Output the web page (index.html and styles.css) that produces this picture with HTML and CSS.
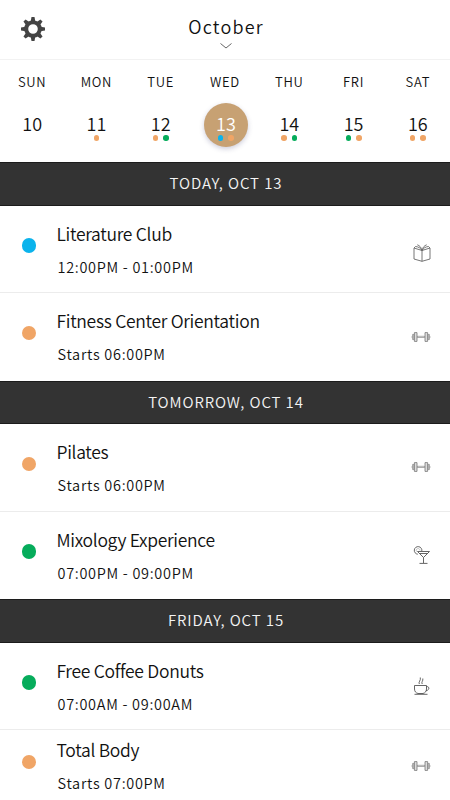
FILE: index.html
```html
<!DOCTYPE html>
<html lang="en">
  <head>
    <meta charset="UTF-8" />
    <meta name="viewport" content="width=device-width, initial-scale=1.0" />
    <title>October</title>
    <link rel="stylesheet" href="styles.css">
  </head>
  <body>
    <!-- shared icons -->
    <svg class="sprite">
      <symbol id="dumbbell" viewBox="0 0 20 10">
        <path d="M6.5 4.3h7v1.2h-7z" fill="#fff" stroke="#888" stroke-width=".7" />
        <path d="M1.6 2.4h1.5v5.2h-1.5zM16.9 2.4h1.5v5.2h-1.5z" fill="#ccc" stroke="#888" stroke-width=".7" />
        <path d="M3.4 .6h2.6v8.8h-2.6zM14 .6h2.6v8.8h-2.6z" fill="#ddd" stroke="#777" stroke-width=".8" />
        <path d="M.4 5h1M18.6 5h1" stroke="#888" stroke-width=".8" />
      </symbol>
    </svg>

    <div class="header">
      <svg class="gear" viewBox="-12 -12 24 24">
        <g fill="#444">
          <path id="tooth" d="M-2.3 -7.5L-1.5 -12h3L2.3 -7.5z" />
          <use href="#tooth" transform="rotate(45)" />
          <use href="#tooth" transform="rotate(90)" />
          <use href="#tooth" transform="rotate(135)" />
          <use href="#tooth" transform="rotate(180)" />
          <use href="#tooth" transform="rotate(225)" />
          <use href="#tooth" transform="rotate(270)" />
          <use href="#tooth" transform="rotate(315)" />
        </g>
        <circle r="6.8" fill="none" stroke="#444" stroke-width="4" />
      </svg>
      <div class="month">
        <h1>October</h1>
        <svg class="arrow" viewBox="0 0 12 6"><path d="M.5 .5L6 5L11.5 .5" fill="none" stroke="#555" stroke-width=".9" /></svg>
      </div>
    </div>

    <ul class="week">
      <li><span class="name">SUN</span><div class="day">10</div></li>
      <li><span class="name">MON</span><div class="day">11<p class="marks"><i class="orange"></i></p></div></li>
      <li><span class="name">TUE</span><div class="day">12<p class="marks"><i class="orange"></i><i class="green"></i></p></div></li>
      <li><span class="name">WED</span><div class="day current">13<p class="marks"><i class="blue"></i><i class="orange"></i></p></div></li>
      <li><span class="name">THU</span><div class="day">14<p class="marks"><i class="orange"></i><i class="green"></i></p></div></li>
      <li><span class="name">FRI</span><div class="day">15<p class="marks"><i class="green"></i><i class="orange"></i></p></div></li>
      <li><span class="name">SAT</span><div class="day">16<p class="marks"><i class="orange"></i><i class="orange"></i></p></div></li>
    </ul>

    <h2 class="bar">TODAY, OCT 13</h2>
    <div class="item">
      <span class="dot blue"></span>
      <div class="info">
        <h3>Literature Club</h3>
        <p class="time">12:00PM - 01:00PM</p>
      </div>
      <svg class="icon book" viewBox="0 0 18 18">
        <g fill="none" stroke="#666" stroke-width=".9">
          <path d="M9 6.5L1 4v11l8 2.3L17 15V4z" />
          <path d="M9 6.5v10.8" />
          <path d="M9 6.5C7.5 4 5.5 2.8 2.5 2.5M9 6.5C8.3 3.3 6.7 1.7 4.3 .8M9 6.5C10.5 4 12.5 2.8 15.5 2.5M9 6.5C9.7 3.3 11.3 1.7 13.7 .8M1 4l1.5-1.5M17 4l-1.5-1.5" />
        </g>
      </svg>
    </div>
    <div class="item">
      <span class="dot orange"></span>
      <div class="info">
        <h3>Fitness Center Orientation</h3>
        <p class="time">Starts 06:00PM</p>
      </div>
      <svg class="icon dumbbell"><use href="#dumbbell" /></svg>
    </div>

    <h2 class="bar">TOMORROW, OCT 14</h2>
    <div class="item">
      <span class="dot orange"></span>
      <div class="info">
        <h3>Pilates</h3>
        <p class="time">Starts 06:00PM</p>
      </div>
      <svg class="icon dumbbell"><use href="#dumbbell" /></svg>
    </div>
    <div class="item">
      <span class="dot green"></span>
      <div class="info">
        <h3>Mixology Experience</h3>
        <p class="time">07:00PM - 09:00PM</p>
      </div>
      <svg class="icon drink" viewBox="0 0 18 18">
        <g fill="none" stroke="#555" stroke-width=".9">
          <path d="M4.5 5.5h12L10.5 11.5zM6.5 7.5h8M10.5 11.5v5.5M6.5 17.4h8" />
          <path d="M4.8 8.2A3.8 3.8 0 1 1 8.8 5.2" />
          <path d="M3.5 5.5A1.9 1.9 0 1 1 7 4.5" stroke="#999" stroke-width=".6" />
        </g>
      </svg>
    </div>

    <h2 class="bar">FRIDAY, OCT 15</h2>
    <div class="item">
      <span class="dot green"></span>
      <div class="info">
        <h3>Free Coffee Donuts</h3>
        <p class="time">07:00AM - 09:00AM</p>
      </div>
      <svg class="icon coffee" viewBox="0 0 18 18">
        <g fill="none" stroke="#555" stroke-width=".9">
          <path d="M1.5 8.5h12v3.5c0 2.5-1.5 4-3.5 4.5h-5c-2-.5-3.5-2-3.5-4.5zM1.5 17.3h13" />
          <path d="M13.5 9.7c3-.8 3.5 3.6-.6 4" />
          <path d="M6.3 7c-1.2-2 1.800-3.500 1-6.500M9.2 7c-1.2-2 1.2-3 .6-5.5" />
        </g>
      </svg>
    </div>
    <div class="item last">
      <span class="dot orange"></span>
      <div class="info">
        <h3>Total Body</h3>
        <p class="time">Starts 07:00PM</p>
      </div>
      <svg class="icon dumbbell"><use href="#dumbbell" /></svg>
    </div>
  </body>
</html>
```

FILE: styles.css
```css
* {
  margin: 0;
  padding: 0;
  box-sizing: border-box;
}

body {
  height: 800px;
  overflow: hidden;
  background-color: #fff;
  color: #111;
  font-family: "Noto Sans CJK SC", "Noto Sans", sans-serif;
  font-weight: 350;
}

li {
  list-style-type: none;
}

h1,
h2,
h3 {
  font-weight: 350;
}

.sprite {
  display: none;
}

.blue {
  background-color: #0bb3ec;
}

.orange {
  background-color: #f0a566;
}

.green {
  background-color: #06ac5b;
}

/* header */
.header {
  display: grid;
  grid-template-columns: 80px 1fr 80px;
  height: 60px;
  border-bottom: 1px solid #f2f2f2;
}

.gear {
  width: 24px;
  height: 24px;
  margin: 17px 0 0 21px;
}

.month {
  display: flex;
  flex-direction: column;
  align-items: center;
  padding: 14px 0 0 2px;
}

.month h1 {
  height: 24px;
  line-height: 24px;
  font-size: 18px;
  letter-spacing: 1.2px;
}

.arrow {
  width: 12px;
  height: 6px;
  margin-top: 5px;
}

/* week */
.week {
  display: grid;
  grid-template-columns: repeat(7, 1fr);
  height: 102.3px;
  padding-top: 12px;
}

.week li {
  display: flex;
  flex-direction: column;
  align-items: center;
}

.name {
  height: 20px;
  line-height: 20px;
  font-size: 13px;
  letter-spacing: .7px;
}

.day {
  width: 44px;
  height: 44px;
  margin-top: 11px;
  padding-top: 9px;
  border-radius: 50%;
  line-height: 23px;
  font-size: 18px;
  text-align: center;
}

.current {
  margin-left: 2px;
  background-color: #c7a173;
  color: #fff;
  box-shadow: 0 2px 5px rgba(60, 60, 110, .25);
}

.marks {
  display: flex;
  justify-content: center;
  gap: 5px;
}

.marks i {
  width: 5.5px;
  height: 5.5px;
  border-radius: 50%;
}

/* date bar */
.bar {
  height: 43.5px;
  line-height: 40px;
  border: solid #1c1c1c;
  border-width: 1px 0;
  background-color: #333;
  color: #f4f4f4;
  font-size: 15px;
  letter-spacing: .9px;
  text-align: center;
  text-indent: 2px;
}

/* event rows */
.item {
  display: flex;
  height: 86.5px;
  padding: 15px 19px 0 21.5px;
}

.item + .item {
  height: 88.5px;
  border-top: 1px solid #ececec;
}

.dot {
  width: 14.5px;
  height: 14.5px;
  margin-top: 17.5px;
  border-radius: 50%;
}

.info {
  flex: 1;
  padding-left: 20.5px;
}

.info h3 {
  height: 26px;
  line-height: 26px;
  font-size: 17.5px;
  letter-spacing: -.3px;
}

.time {
  height: 22px;
  margin-top: 9px;
  padding-left: 1px;
  line-height: 22px;
  font-size: 14.5px;
  letter-spacing: .7px;
}

.icon {
  width: 18px;
  height: 18px;
  margin-top: 23px;
}

.dumbbell {
  width: 20px;
  height: 10px;
}

.item + .item .dumbbell {
  margin-top: 24px;
}

.drink,
.coffee {
  margin-top: 19px;
}

.item.last {
  padding-top: 7px;
}
```
